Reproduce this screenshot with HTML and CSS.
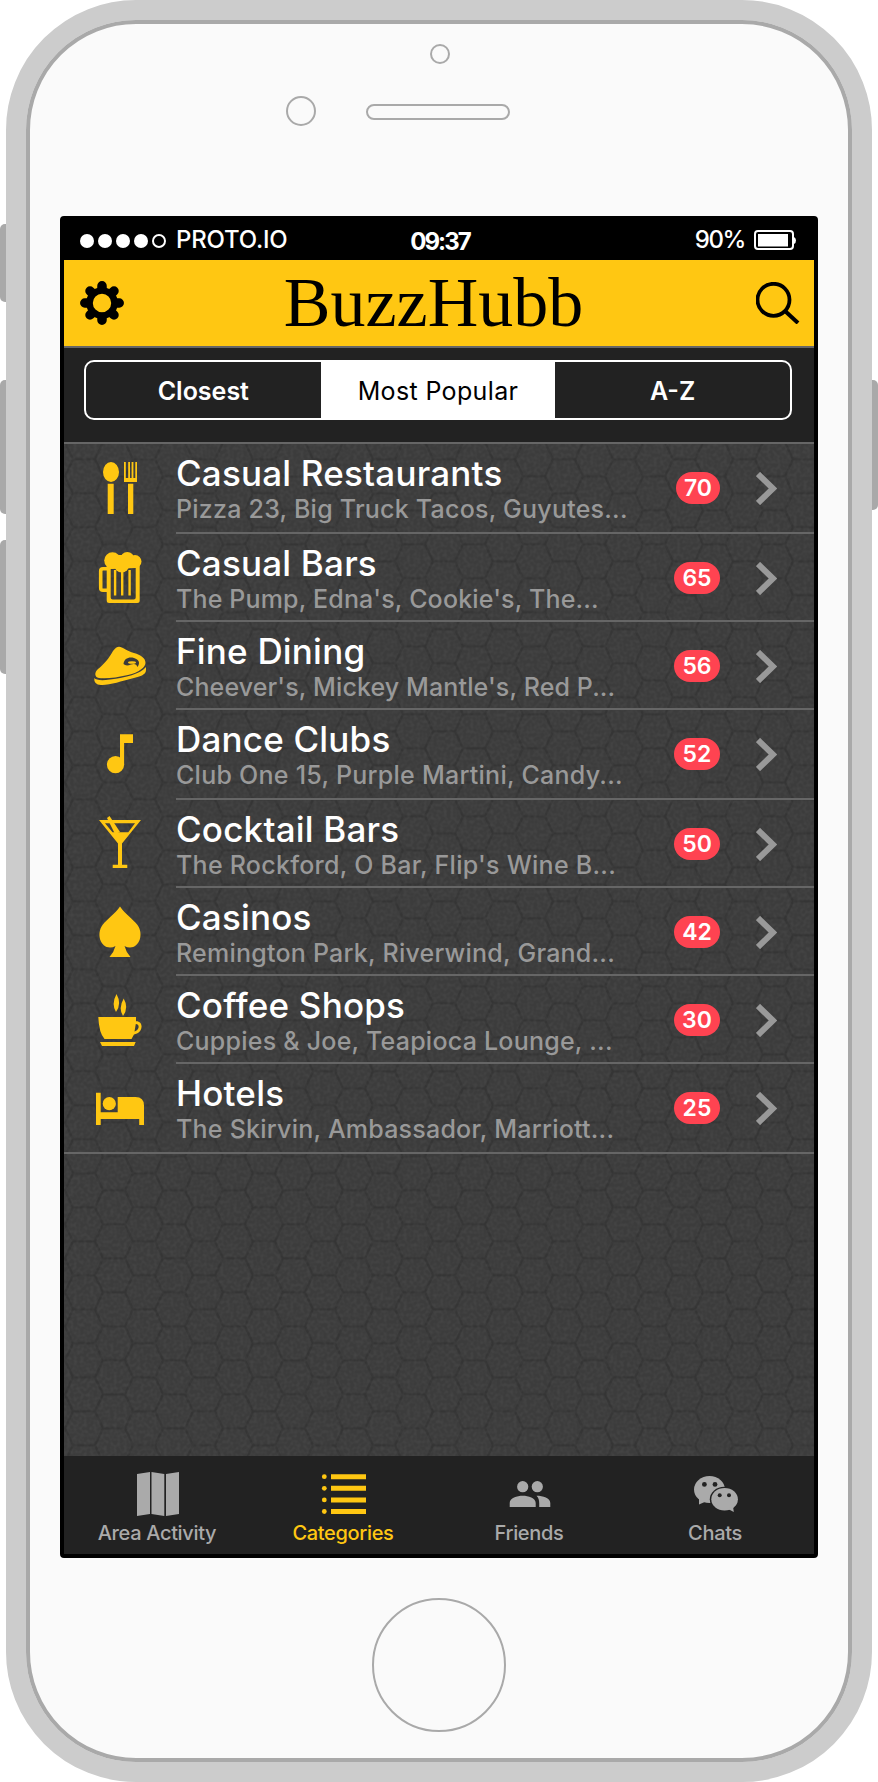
FILE: index.html
```html
<!DOCTYPE html>
<html lang="en">
<head>
<meta charset="utf-8">
<title>BuzzHubb</title>
<link rel="stylesheet" href="styles.css">
</head>
<body>
<div class="device">
  <span class="side-button mute"></span>
  <span class="side-button volume-up"></span>
  <span class="side-button volume-down"></span>
  <span class="side-button power"></span>
  <div class="face">
    <div class="top-bezel">
      <span class="camera"></span>
      <div class="ear-row"><span class="sensor"></span><span class="speaker"></span></div>
    </div>
    <div class="screen">
      <div class="status-bar">
        <div class="signal"><i></i><i></i><i></i><i></i><i class="empty"></i></div>
        <span class="carrier">PROTO.IO</span>
        <span class="clock">09:37</span>
        <span class="charge">90%</span>
        <svg class="battery" viewBox="0 0 42 20" width="42" height="20"><rect x="1" y="1" width="38" height="18" rx="3" fill="none" stroke="#fff" stroke-width="2"/><rect x="4" y="4" width="30" height="12.500" fill="#fff"/><path d="M40 7q2 1 2 3.500t-2 3.500z" fill="#fff"/></svg>
      </div>
      <header class="header">
        <svg viewBox="-22 -22 44 44" width="44" height="44"><g stroke="#000" stroke-width="9.500" stroke-linecap="round"><path d="M0-14.500V-17.200M0 14.500V17.200M-14.500 0H-17.200M14.500 0H17.200M-10.800-10.800-12-12M10.800-10.800 12-12M-10.800 10.800-12 12M10.800 10.800 12 12"/></g><circle r="12.500" fill="none" stroke="#000" stroke-width="6.600"/></svg>
        <h1 class="brand">BuzzHubb</h1>
        <svg viewBox="0 0 44 42" width="44" height="42"><circle cx="17.500" cy="17.800" r="16" fill="none" stroke="#000" stroke-width="3.800"/><path d="M28.500 28.500 42 41" stroke="#000" stroke-width="4"/></svg>
      </header>
      <div class="filter">
        <div class="segments"><span>Closest</span><span class="selected">Most Popular</span><span>A-Z</span></div>
      </div>
      <main class="content">
        <svg class="honeycomb" width="750" height="1012">
          <defs>
            <pattern id="hex" width="60" height="34" x="20" y="15.300" patternUnits="userSpaceOnUse">
              <path d="M-11 0H11L19 17L11 34H-11M19 17H41L49 0H71M41 17L49 34H71M-11 34H11" fill="none" stroke="#353535" stroke-width="2.400"/>
            </pattern>
            <filter id="grain" x="0" y="0" width="100%" height="100%"><feTurbulence type="fractalNoise" baseFrequency=".3" numOctaves="1" seed="4"/><feColorMatrix values="0 0 0 0 .35  0 0 0 0 .35  0 0 0 0 .35  .7 0 0 0 -.25"/></filter>
          </defs>
          <rect width="750" height="1012" fill="#3c3c3c"/>
          <rect width="750" height="1012" fill="url(#hex)"/>
          <rect width="750" height="1012" filter="url(#grain)" opacity=".28"/>
        </svg>
        <ul class="list">
          <li class="row tall">
            <svg class="icon" viewBox="92 0 56 88"><ellipse cx="111" cy="28" rx="8" ry="10"/><path d="M107.700 39.700H113.700V70H107.700zM128 39.700H133.300V70H128zM124 18h1.800v16h2.400V18h1.800v16h1.600V18h1.800v16h1.900V18H137v20H124z"/></svg>
            <div class="text"><h2>Casual Restaurants</h2><p class="s1">Pizza 23, Big Truck Tacos, Guyutes...</p></div>
            <span class="badge narrow">70</span><svg class="chevron" viewBox="0 0 21 33"><path d="M2 2 17 16.500 2 31"/></svg>
          </li>
          <li class="row">
            <svg class="icon" viewBox="92 0 56 88"><path fill-rule="evenodd" d="M106.700 30H139.700V66.500q0 2.500-2.500 2.500H109.200q-2.500 0-2.500-2.500zM110.700 35V63.500q0 2 2 2H133.700q2 0 2-2V34z"/><path d="M113.900 36h2.400V61.500h-2.400zM121 37h2.400V61.500H121zM128.400 36h2.400V61.500h-2.400z"/><path d="M107.500 34.800H103q-2.300 0-2.300 2.300V54q0 2.300 2.300 2.300h4.500" fill="none" stroke="#ffc712" stroke-width="3.600"/><circle cx="112.500" cy="26.500" r="8.300"/><circle cx="121.700" cy="31" r="7.500"/><circle cx="127.300" cy="25" r="7"/><circle cx="135" cy="27.500" r="6.500"/><path d="M114 21h18v13h-18z"/></svg>
            <div class="text"><h2>Casual Bars</h2><p class="s2">The Pump, Edna's, Cookie's, The...</p></div>
            <span class="badge">65</span><svg class="chevron" viewBox="0 0 21 33"><path d="M2 2 17 16.500 2 31"/></svg>
          </li>
          <li class="row">
            <svg class="icon" viewBox="92 0 56 88"><path d="M119 24.700C122 24.500 127 29 134 31C141 33 145.500 36 145.500 41C145.500 45 139 50.500 128 53C117 55.500 106 57 99 56C94 55.200 94.500 50 98 47C103 43.500 110 35 113 29Q116 24.800 119 24.700z"/><path d="M94.300 56C96 58 101 58.800 110 57.500C126 55.500 140 52 146 45V48C146 53 140 54.500 132 56.500C122 59 109 63.500 101 63Q93.500 62.500 94.300 56z"/><path d="M123.500 42C124 36.500 129 34.500 134 36C139 37.500 140.500 41 137.500 45Q136 40.500 131 42.500Q126 44.500 123.500 42z" fill="#3a3a3a"/><ellipse cx="132" cy="40.500" rx="4" ry="1.300"/></svg>
            <div class="text"><h2>Fine Dining</h2><p class="s3">Cheever's, Mickey Mantle's, Red P...</p></div>
            <span class="badge">56</span><svg class="chevron" viewBox="0 0 21 33"><path d="M2 2 17 16.500 2 31"/></svg>
          </li>
          <li class="row tall">
            <svg class="icon" viewBox="92 0 56 88"><circle cx="115.500" cy="54.700" r="8.600"/><path d="M120 24.300H133V33H124.100V55H120z"/></svg>
            <div class="text"><h2>Dance Clubs</h2><p class="s4">Club One 15, Purple Martini, Candy...</p></div>
            <span class="badge">52</span><svg class="chevron" viewBox="0 0 21 33"><path d="M2 2 17 16.500 2 31"/></svg>
          </li>
          <li class="row">
            <svg class="icon" viewBox="92 0 56 88"><path fill-rule="evenodd" d="M99 20H141L122 43.500V64.700H127.300V68H112.700V64.700H118V43.500zM105 23.300 112.500 32.300H128.300L135 23.300z"/><path d="M107 18 109.500 16 120 32 115 34z"/></svg>
            <div class="text"><h2>Cocktail Bars</h2><p class="s5">The Rockford, O Bar, Flip's Wine B...</p></div>
            <span class="badge">50</span><svg class="chevron" viewBox="0 0 21 33"><path d="M2 2 17 16.500 2 31"/></svg>
          </li>
          <li class="row">
            <svg class="icon" viewBox="92 0 56 88"><path d="M120 18.500C125 26 133 31 137.500 37C144 46 139.500 59.500 130 59.500Q127 59.500 124.500 58Q126 64 130.500 69H109.500Q114 64 115.500 58Q113 59.500 110 59.500C100.500 59.500 96 46 102.500 37C107 31 115 26 120 18.500z"/></svg>
            <div class="text"><h2>Casinos</h2><p class="s6">Remington Park, Riverwind, Grand...</p></div>
            <span class="badge">42</span><svg class="chevron" viewBox="0 0 21 33"><path d="M2 2 17 16.500 2 31"/></svg>
          </li>
          <li class="row">
            <svg class="icon" viewBox="92 0 56 88"><path d="M116.500 18Q122 28 116 36Q111 28 116.500 18zM123.700 22.500Q129 32 123 40Q118 32 123.700 22.500zM98.300 41H136V45.200C143 45 143.500 54 137 57.500L134 58.500 131.500 63H104.500Q99 57 98.300 41zM100 66H135.700L134 70H102z"/><path d="M135.800 48C140 48 139.500 54 134.500 55.500z" fill="#3c3c3c"/></svg>
            <div class="text"><h2>Coffee Shops</h2><p class="s7">Cuppies &amp; Joe, Teapioca Lounge, ...</p></div>
            <span class="badge">30</span><svg class="chevron" viewBox="0 0 21 33"><path d="M2 2 17 16.500 2 31"/></svg>
          </li>
          <li class="row tall last">
            <svg class="icon" viewBox="92 0 56 88"><circle cx="109.300" cy="39.700" r="6.600"/><path d="M96 28.700H100.700V48.300H117.700V33H135.500Q144 33 144 41.500V61H139.200V55H100.700V61H96z"/></svg>
            <div class="text"><h2>Hotels</h2><p class="s8">The Skirvin, Ambassador, Marriott...</p></div>
            <span class="badge">25</span><svg class="chevron" viewBox="0 0 21 33"><path d="M2 2 17 16.500 2 31"/></svg>
          </li>
        </ul>
      </main>
      <nav class="tabs">
        <div class="tab"><svg viewBox="127 1466 60 56"><path d="M137 1474 150 1472V1514L137 1516zM151.500 1472 164.300 1474V1516L151.500 1514zM166 1474 179 1472V1514L166 1516z"/></svg><span>Area Activity</span></div>
        <div class="tab active"><svg viewBox="313 1466 60 56"><path d="M331 1474.200H366v5H331zM331 1485.800H366v5H331zM331 1497.400H366v5H331zM331 1509H366v5H331z"/><circle cx="324.300" cy="1476.700" r="2.400"/><circle cx="324.300" cy="1488.300" r="2.400"/><circle cx="324.300" cy="1499.900" r="2.400"/><circle cx="324.300" cy="1511.500" r="2.400"/></svg><span>Categories</span></div>
        <div class="tab"><svg viewBox="499 1466 60 56"><circle cx="522.700" cy="1486.700" r="5.600"/><circle cx="537.300" cy="1486.700" r="5.600"/><path d="M509.700 1507V1503C509.700 1498 517 1495.700 522.700 1495.700S535.700 1498 535.700 1503V1507zM536.500 1495.700C543 1495.700 550.300 1498 550.300 1503V1507H539.200V1503C539.200 1500 538.500 1497.700 536.500 1495.700z"/></svg><span>Friends</span></div>
        <div class="tab"><svg viewBox="685 1466 60 56"><ellipse cx="709.500" cy="1489.500" rx="15.500" ry="13.500"/><path d="M699 1498 699 1504.500 707 1501z"/><ellipse cx="724.300" cy="1499.300" rx="14.500" ry="12.500" fill="#222"/><ellipse cx="724.600" cy="1499.300" rx="13.300" ry="11.300"/><path d="M727 1508.500 733.800 1512 733 1506z"/><g fill="#222"><circle cx="704.400" cy="1484.400" r="2.400"/><circle cx="715" cy="1484.400" r="2.400"/><circle cx="719.700" cy="1495.300" r="2"/><circle cx="729" cy="1495.300" r="2"/></g></svg><span>Chats</span></div>
      </nav>
    </div>
    <span class="home-button"></span>
  </div>
</div>
</body>
</html>
```
FILE: styles.css
```css
* { box-sizing: border-box; }
body { margin: 0; background: #fff; font-family: Inter, "Liberation Sans", sans-serif; }
h1, h2, p, ul { margin: 0; padding: 0; font-weight: 400; }
svg { display: block; flex: none; }

.device { position: relative; width: 878px; height: 1782px; padding: 0 6px; }
.face {
  display: flex; flex-direction: column; align-items: center;
  position: relative; width: 866px; height: 1782px;
  border: 20px solid #ccc; border-radius: 130px; background: #fafafa;
}
.face::before { content: ""; position: absolute; inset: 0; border: 4px solid #a9a9a9; border-radius: 110px; }
.side-button { position: absolute; left: 0; width: 12px; background: #a9a9a9; border-radius: 5px; }
.mute { top: 224px; height: 78px; }
.volume-up { top: 380px; height: 134px; }
.volume-down { top: 540px; height: 134px; }
.power { top: 380px; left: auto; right: 0; height: 130px; }

.top-bezel { display: flex; flex-direction: column; width: 818px; height: 196px; padding-top: 24px; flex: none; }
.camera { width: 20px; height: 20px; margin-left: 400px; border: 2px solid #a9a9a9; border-radius: 50%; }
.ear-row { display: flex; align-items: center; gap: 50px; margin: 32px 0 0 256px; }
.sensor { width: 30px; height: 30px; border: 2px solid #a9a9a9; border-radius: 50%; }
.speaker { width: 144px; height: 16px; margin-top: 2px; border: 2px solid #a9a9a9; border-radius: 8px; }
.home-button { width: 134px; height: 134px; margin-top: 40px; border: 2px solid #a9a9a9; border-radius: 50%; flex: none; }

.screen { width: 758px; height: 1342px; border: 4px solid #000; border-radius: 4px; background: #222; display: flex; flex-direction: column; flex: none; overflow: hidden; }
.status-bar { height: 40px; background: #000; color: #fff; display: flex; align-items: center; padding: 0 18px 0 16px; font-size: 24px; font-weight: 500; line-height: 40px; }
.signal { display: flex; gap: 4px; padding-top: 2px; }
.signal i { width: 14px; height: 14px; border-radius: 50%; background: #fff; }
.signal .empty { background: none; border: 2px solid #fff; }
.carrier { width: 112px; margin-left: 10px; letter-spacing: -.2px; white-space: nowrap; }
.clock { width: 64px; margin-left: 120px; padding-top: 3px; font-weight: 700; letter-spacing: -1.9px; text-align: center; }
.charge { margin-left: auto; margin-right: 9px; letter-spacing: -1.4px; }

.header { height: 88px; padding: 0 14px 0 16px; background: #ffc712; border-bottom: 2px solid #666; display: flex; align-items: center; justify-content: space-between; }
.brand { font-family: "Liberation Serif", serif; font-size: 70px; line-height: 86px; color: #000; margin-left: -13px; }
.filter { height: 96px; padding: 12px 22px 0 20px; border-bottom: 2px solid #666; }
.segments { display: grid; grid-template-columns: repeat(3, 1fr); height: 60px; border: 2px solid #fff; border-radius: 10px; overflow: hidden; color: #fff; font-size: 25px; font-weight: 600; line-height: 59px; text-align: center; }
.selected { background: #fff; color: #000; font-weight: 400; letter-spacing: .35px; }

.content { position: relative; height: 1012px; }
.honeycomb { position: absolute; inset: 0; }
.list { position: relative; list-style: none; }
.row { position: relative; display: flex; height: 88px; }
.row.tall { height: 90px; }
.row::after { content: ""; position: absolute; left: 112px; right: 0; bottom: 0; height: 2px; background: #666; }
.last::after { left: 0; }
.icon { width: 56px; height: 88px; margin-left: 28px; fill: #ffc712; }
.text { width: 480px; margin-left: 28px; padding-top: 9px; white-space: nowrap; font-weight: 500; }
.text h2 { font-size: 35px; font-weight: inherit; line-height: 40px; letter-spacing: .2px; color: #fff; }
.text p { font-size: 25px; font-weight: inherit; line-height: 32px; color: #999; letter-spacing: .23px; }
.text .s2 { letter-spacing: .16px; }
.text .s3 { letter-spacing: .12px; }
.text .s4, .text .s5 { letter-spacing: .26px; }
.badge { width: 46px; height: 32px; margin: 28px 0 0 18px; border-radius: 16px; background: #ff4351; color: #fff; font-size: 23px; font-weight: 600; line-height: 32px; text-align: center; }
.badge.narrow { width: 44px; margin-left: 20px; }
.chevron { width: 21px; height: 33px; margin: 28px 0 0 36px; fill: none; stroke: #999; stroke-width: 6; }

.tabs { height: 98px; padding-right: 6px; background: #222; display: grid; grid-template-columns: repeat(4, 1fr); color: #aaa; fill: #aaa; }
.tab { display: flex; flex-direction: column; align-items: center; padding-top: 10px; font-size: 20px; font-weight: 500; line-height: 22px; letter-spacing: -.33px; white-space: nowrap; }
.tab svg { width: 60px; height: 56px; }
.active { color: #ffc712; fill: #ffc712; }
```
